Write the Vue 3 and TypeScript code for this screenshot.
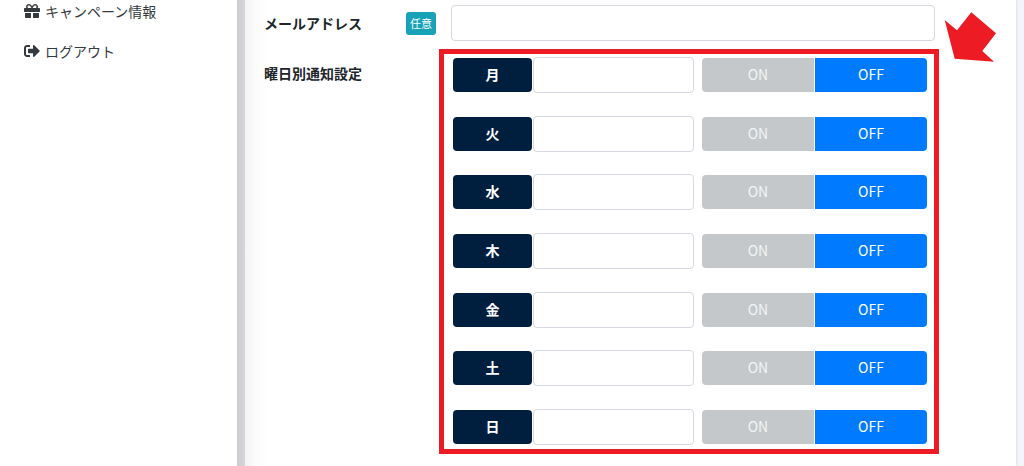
<script setup lang="ts">
import { reactive } from 'vue'

interface DaySetting {
  id: string
  label: string
  value: string
  enabled: boolean
}

const days = reactive<DaySetting[]>(
  ['月', '火', '水', '木', '金', '土', '日'].map((label, index) => ({
    id: `day-${index}`,
    label,
    value: '',
    enabled: false,
  })),
)
</script>

<template>
  <div class="page">
    <nav class="sidebar">
      <a class="nav-link" href="#campaign">
        <svg class="icon" viewBox="0 0 512 512" aria-hidden="true">
          <path d="M32 448c0 17.700 14.300 32 32 32h160V320H32v128zm256 32h160c17.700 0 32-14.300 32-32V320H288v160zm192-320h-42.100c6.200-12.100 10.100-25.500 10.100-40 0-48.500-39.500-88-88-88-41.600 0-68.500 21.300-103 68.300-34.500-47-61.400-68.300-103-68.300-48.500 0-88 39.500-88 88 0 14.500 3.800 27.900 10.100 40H32c-17.700 0-32 14.300-32 32v80c0 8.800 7.200 16 16 16h480c8.800 0 16-7.200 16-16v-80c0-17.700-14.300-32-32-32zm-326.100 0c-22.100 0-40-17.900-40-40s17.900-40 40-40c19.900 0 34.600 3.300 86.100 80h-86.100zm206.100 0h-86.100c51.400-76.500 65.700-80 86.100-80 22.100 0 40 17.900 40 40s-17.900 40-40 40z" />
        </svg>
        <span>キャンペーン情報</span>
      </a>
      <a class="nav-link" href="#logout">
        <svg class="icon" viewBox="0 0 512 512" aria-hidden="true">
          <path d="M497 273L329 441c-15 15-41 4.500-41-17v-96H152c-13.300 0-24-10.700-24-24v-96c0-13.300 10.700-24 24-24h136V88c0-21.400 25.900-32 41-17l168 168c9.300 9.400 9.300 24.600 0 34zM192 436v-40c0-6.600-5.400-12-12-12H96c-17.700 0-32-14.300-32-32V160c0-17.700 14.300-32 32-32h84c6.600 0 12-5.400 12-12V76c0-6.600-5.400-12-12-12H96c-53 0-96 43-96 96v192c0 53 43 96 96 96h84c6.600 0 12-5.400 12-12z" />
        </svg>
        <span>ログアウト</span>
      </a>
    </nav>

    <main class="content">
      <form class="form" @submit.prevent>
        <div class="form-row email-row">
          <label class="label" for="email">メールアドレス</label>
          <span class="badge">任意</span>
          <input id="email" class="text-input email-input" type="email" />
        </div>
        <div class="form-row">
          <span id="days-label" class="label days-label">曜日別通知設定</span>
          <div class="frame" role="group" aria-labelledby="days-label">
            <div v-for="day in days" :key="day.id" class="day-row">
              <label class="day-name" :for="day.id">{{ day.label }}</label>
              <input :id="day.id" v-model="day.value" class="text-input day-input" type="text" />
              <div class="toggle">
                <button
                  type="button"
                  class="toggle-button"
                  :class="{ active: day.enabled }"
                  :aria-pressed="day.enabled"
                  @click="day.enabled = true"
                >ON</button>
                <button
                  type="button"
                  class="toggle-button"
                  :class="{ active: !day.enabled }"
                  :aria-pressed="!day.enabled"
                  @click="day.enabled = false"
                >OFF</button>
              </div>
            </div>
            <svg class="arrow" viewBox="0 0 52 50" aria-hidden="true">
              <polygon points="0.700,8 13,18.300 27.300,0.300 52,21.300 38.300,39 50,49.700 10.700,46.700" />
            </svg>
          </div>
        </div>
      </form>
    </main>
  </div>
</template>

<style>
body {
  margin: 0;
  background: #f4f5fa;
}
</style>

<style scoped>
.page {
  display: flex;
  box-sizing: border-box;
  min-height: 100vh;
  padding-right: 8px;
  font-family: "Noto Sans CJK JP", sans-serif;
  font-size: 14px;
  line-height: 20px;
  color: #212529;
}

.sidebar {
  display: flex;
  flex: 0 0 237px;
  flex-direction: column;
  gap: 20px;
  box-sizing: border-box;
  padding: 1px 24px;
  background: #fff;
}

.nav-link {
  display: flex;
  align-items: center;
  gap: 5px;
  color: #343a40;
  text-decoration: none;
}

.icon {
  width: 16px;
  height: 16px;
  fill: currentColor;
}

.content {
  flex: 1;
  min-width: 0;
  padding: 5px 77px 12px 27px;
  background: linear-gradient(to right, #cbccd0, #d5d6da 8px, #f3f3f3 8px, #fbfbfb 18px, #fff 32px);
  box-shadow: 1px 0 2px #dedfe6;
}

.form {
  display: flex;
  flex-direction: column;
  gap: 8px;
}

.form-row {
  display: flex;
}

.email-row {
  align-items: center;
}

.label {
  flex: 0 0 142px;
  font-weight: 700;
}

.days-label {
  flex-basis: 175px;
  padding-top: 14px;
}

.badge {
  padding: 1px 4px 2px;
  border-radius: 3px;
  background: #17a2b8;
  color: #fff;
  font-size: 11px;
}

.text-input {
  box-sizing: border-box;
  min-width: 0;
  height: 36px;
  padding: 6px 10px;
  border: 1px solid #d5d9df;
  border-radius: 4px;
  background: #fff;
  color: inherit;
  font: inherit;
}

.email-input {
  flex: 1;
  margin: 0 4px 0 15px;
}

.frame {
  position: relative;
  display: flex;
  flex: 1;
  flex-direction: column;
  justify-content: space-between;
  box-sizing: border-box;
  min-width: 0;
  min-height: 405px;
  padding: 3px 7px 4px 9px;
  border: 5px solid #ed1c24;
}

.day-row {
  display: grid;
  grid-template-columns: 79fr 162fr 233fr;
  align-items: center;
}

.day-name {
  padding-bottom: 2px;
  border-radius: 4px;
  background: #001f3f;
  color: #fff;
  font-weight: 700;
  line-height: 32px;
  text-align: center;
}

.day-input {
  margin-left: 1px;
}

.toggle {
  display: flex;
  gap: 1px;
  margin-left: 8px;
}

.toggle-button {
  flex: 1;
  height: 34px;
  padding: 0 0 2px;
  border: 0;
  background: #c4c8cb;
  color: #f3f4f5;
  font: inherit;
  cursor: pointer;
}

.toggle-button:first-child {
  border-radius: 4px 0 0 4px;
}

.toggle-button:last-child {
  border-radius: 0 4px 4px 0;
}

.toggle-button.active {
  background: #007bff;
  color: #fff;
}

.arrow {
  position: absolute;
  top: -42px;
  right: -62px;
  width: 52px;
  height: 50px;
  fill: #ed1c24;
}
</style>
